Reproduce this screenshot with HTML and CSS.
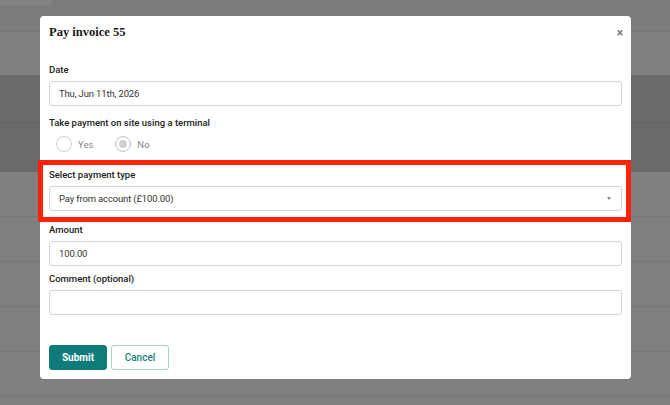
FILE: index.html
```html
<!DOCTYPE html>
<html lang="en">
<head>
  <meta charset="UTF-8" />
  <title>Pay invoice 55</title>
  <link rel="stylesheet" href="styles.css">
</head>
<body>

  <div class="page">
    <div class="page-top"><div class="page-tab"></div></div>
    <div class="page-row first"></div>
    <div class="page-band">
      <div class="band-row"></div>
      <div class="band-row"></div>
    </div>
    <div class="page-row"></div>
    <div class="page-row"></div>
    <div class="page-row"></div>
    <div class="page-row"></div>
    <div class="page-row"></div>
  </div>

  <div class="modal">
    <div class="modal-head">
      <h1>Pay invoice 55</h1>
      <span class="close">&times;</span>
    </div>

    <div class="field date">
      <label>Date</label>
      <div class="input">Thu, Jun 11th, 2026</div>
    </div>

    <div class="field terminal">
      <label>Take payment on site using a terminal</label>
      <div class="radios">
        <span class="radio"><span class="dot"></span>Yes</span>
        <span class="radio checked"><span class="dot"></span>No</span>
      </div>
    </div>

    <div class="highlight">
      <label>Select payment type</label>
      <div class="input select">
        <span>Pay from account (£100.00)</span>
        <span class="caret"></span>
      </div>
    </div>

    <div class="field">
      <label>Amount</label>
      <div class="input">100.00</div>
    </div>

    <div class="field">
      <label>Comment (optional)</label>
      <div class="input"></div>
    </div>

    <div class="actions">
      <button class="btn primary">Submit</button>
      <button class="btn secondary">Cancel</button>
    </div>
  </div>

</body>
</html>
```

FILE: styles.css
```css
body {
  margin: 0;
  background: #808080;
  font-family: Roboto, "Liberation Sans", sans-serif;
  color: #222;
}
.page {
  height: 405px;
  overflow: hidden;
}
.page div {
  box-sizing: border-box;
}
.page-top {
  height: 32px;
  background: #7c7c7c;
  border-bottom: 1px solid #767676;
}
.page-tab {
  width: 52px;
  height: 5px;
  background: #848484;
  border-radius: 0 0 4px 0;
}
.page-row {
  height: 45px;
  border-bottom: 1px solid #777;
}
.page-row.first {
  height: 43px;
  border-bottom: none;
}
.page-band {
  background: #6a6a6a;
}
.band-row {
  height: 48px;
  border-bottom: 1px solid #646464;
}
.band-row + .band-row {
  height: 49px;
  border-bottom: none;
}

.modal {
  position: absolute;
  left: 40px;
  top: 16px;
  width: 591px;
  height: 363px;
  box-sizing: border-box;
  background: white;
  border-radius: 4px;
  padding: 0 9px;
}
.modal-head {
  display: flex;
  justify-content: space-between;
  align-items: center;
  height: 33px;
  margin-bottom: 14px;
}
h1 {
  margin: 0;
  font-family: "Liberation Serif", serif;
  font-size: 12.5px;
  font-weight: bold;
  color: #1a1a1a;
}
.close {
  font-size: 12px;
  font-weight: bold;
  color: #777;
  margin-right: -1px;
}
label {
  display: block;
  font-size: 9.5px;
  font-weight: 500;
  color: #222;
  line-height: 14px;
  margin-bottom: 4px;
}
.field {
  margin-bottom: 6px;
}
.field.date {
  margin-bottom: 10px;
}
.input {
  height: 25px;
  box-sizing: border-box;
  border: 1px solid #d3d3d3;
  border-radius: 3px;
  padding: 0 9px;
  font-size: 9.5px;
  letter-spacing: -0.15px;
  line-height: 23px;
  color: #333;
}
.select {
  display: flex;
  justify-content: space-between;
  align-items: center;
}
.caret {
  width: 0;
  height: 0;
  border-left: 2.5px solid transparent;
  border-right: 2.5px solid transparent;
  border-top: 3px solid #888;
  margin-right: 1px;
}
.radios {
  display: flex;
  gap: 22px;
  padding-left: 7px;
  height: 20px;
  align-items: center;
}
.radio {
  display: flex;
  align-items: center;
  gap: 6px;
  font-size: 9.5px;
  color: #888;
}
.dot {
  width: 16px;
  height: 16px;
  box-sizing: border-box;
  border: 1px solid #d0d0d0;
  border-radius: 50%;
}
.checked .dot {
  border-color: #c8c8c8;
  background: #d0d0d0;
  box-shadow: inset 0 0 0 3px white;
}
.highlight {
  margin: 0 -9px 1px -11px;
  border: 5px solid #ff2200;
  padding: 3px 4px 6px 6px;
}
.actions {
  display: flex;
  gap: 4px;
  margin-top: 30px;
}
.btn {
  height: 25px;
  width: 58px;
  border-radius: 3px;
  font-family: Roboto, "Liberation Sans", sans-serif;
  font-size: 10px;
  font-weight: bold;
  padding: 0;
}
.primary {
  background: #0e7d7a;
  border: 1px solid #0e7d7a;
  color: white;
}
.secondary {
  background: white;
  border: 1px solid #a7d2d2;
  color: #17807d;
  font-weight: 500;
}
```
